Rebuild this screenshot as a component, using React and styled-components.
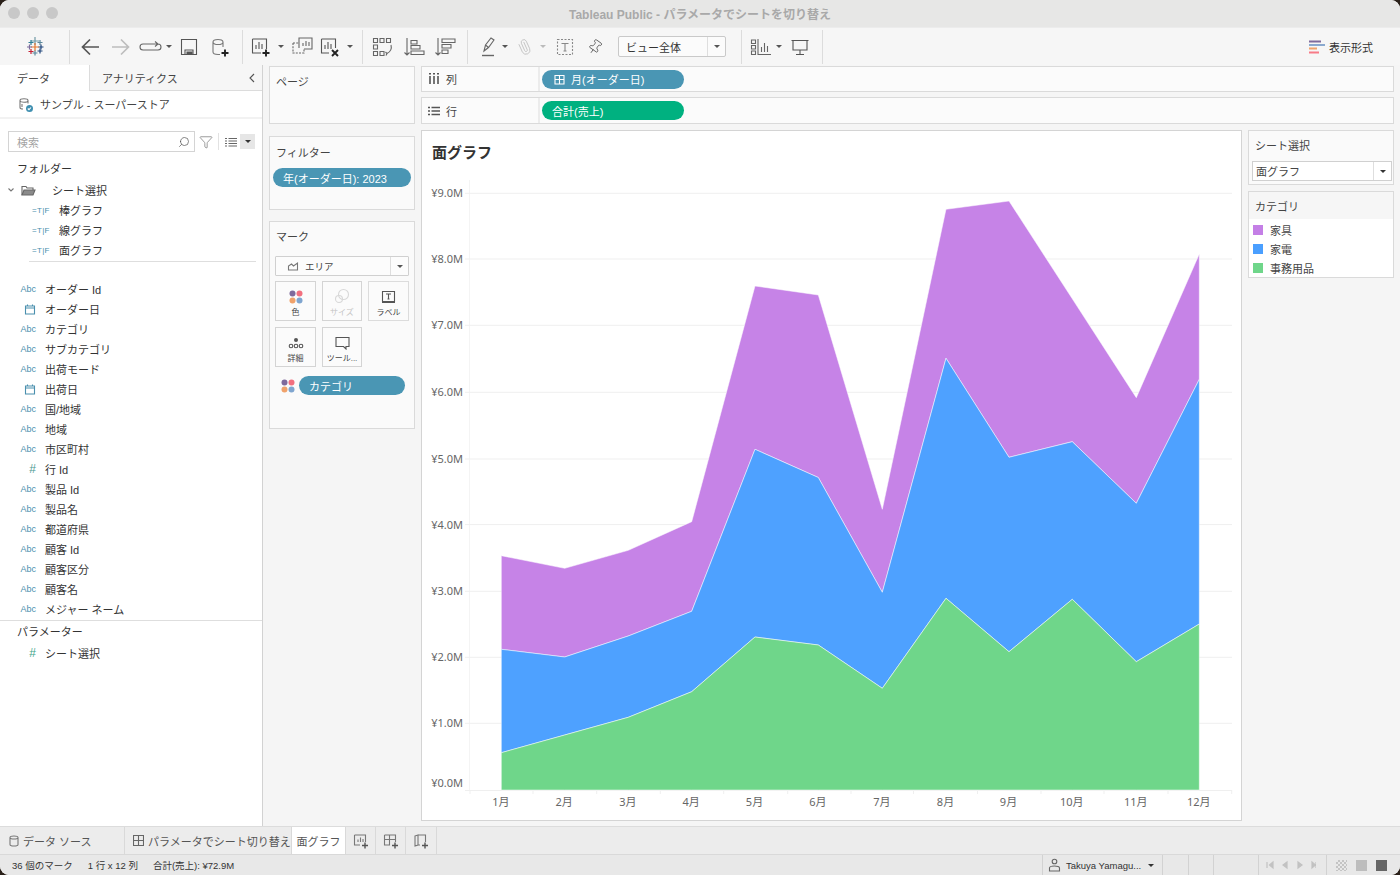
import React from "react";
import styled, { createGlobalStyle } from "styled-components";
import { Paperclip, Pin, Search, Filter } from "lucide-react";

const GlobalStyle = createGlobalStyle`
  html, body {
    margin: 0;
    padding: 0;
    background: #2a2019;
  }
  body {
    font-family: "Liberation Sans", "Noto Sans CJK JP", sans-serif;
    font-size: 11px;
    color: #333;
  }
`;

const Window = styled.div`
  width: 1400px;
  height: 875px;
  display: flex;
  flex-direction: column;
  background: #f5f5f5;
  border-radius: 9px;
  overflow: hidden;
`;

const TitleBar = styled.div`
  height: 27px;
  flex: none;
  position: relative;
  display: flex;
  align-items: center;
  justify-content: center;
  background: #e7e7e6;
  font-size: 12px;
  font-weight: 700;
  color: #a9a9a9;
`;

const Lights = styled.div`
  position: absolute;
  left: 8px;
  top: 7px;
  display: flex;
  gap: 7px;
`;

const Light = styled.span`
  width: 12px;
  height: 12px;
  border-radius: 50%;
  background: #c8c8c8;
`;

const Toolbar = styled.div`
  height: 38px;
  flex: none;
  display: flex;
  align-items: center;
  background: #f6f6f6;
  border-top: 1px solid #ececec;
  box-sizing: border-box;
`;

const Tool = styled.div`
  width: ${(p) => p.$w || 24}px;
  height: 24px;
  flex: none;
  margin-left: ${(p) => p.$ml || 0}px;
  display: flex;
  align-items: center;
  justify-content: center;
  color: #666;
`;

const ToolSep = styled.div`
  width: 1px;
  height: 34px;
  flex: none;
  margin-left: ${(p) => p.$ml || 0}px;
  background: #dcdcdc;
`;

const Caret = styled.span`
  width: 0;
  height: 0;
  border-left: 3px solid transparent;
  border-right: 3px solid transparent;
  border-top: 3px solid ${(p) => p.$color || "#555"};
`;

const Glyph = styled.svg`
  display: block;
  flex: none;
  fill: none;
  stroke: ${(p) => p.$stroke || "#5c5c5c"};
  stroke-width: ${(p) => p.$sw || 1.1};
`;

const ToolCombo = styled.div`
  width: 108px;
  height: 21px;
  flex: none;
  margin-left: 11px;
  box-sizing: border-box;
  display: flex;
  align-items: center;
  background: #fbfbfb;
  border: 1px solid #c9c9c9;
  border-radius: 2px;
  padding-left: 7px;
  color: #333;
`;

const ComboText = styled.span`
  flex: 1;
`;

const ComboArrow = styled.span`
  width: 17px;
  height: 100%;
  display: flex;
  align-items: center;
  justify-content: center;
  border-left: 1px solid #dedede;
`;

const FormatButton = styled.div`
  margin-left: auto;
  margin-right: 27px;
  display: flex;
  align-items: center;
  gap: 4px;
  color: #333;
`;

const Main = styled.div`
  flex: 1;
  min-height: 0;
  display: flex;
`;

const DataPane = styled.aside`
  width: 263px;
  flex: none;
  box-sizing: border-box;
  background: #fff;
  border-right: 1px solid #d2d2d2;
`;

const PaneTabs = styled.div`
  height: 26px;
  display: flex;
`;

const PaneTab = styled.div`
  width: ${(p) => (p.$active ? "89px" : "auto")};
  flex: ${(p) => (p.$active ? "none" : "1")};
  box-sizing: border-box;
  display: flex;
  align-items: center;
  justify-content: space-between;
  padding: 0 6px 0 ${(p) => (p.$active ? 17 : 12)}px;
  background: ${(p) => (p.$active ? "#fff" : "#f6f6f6")};
  border-bottom: ${(p) => (p.$active ? "none" : "1px solid #dcdcdc")};
  border-left: ${(p) => (p.$active ? "none" : "1px solid #dcdcdc")};
  color: #444;
`;

const SourceRow = styled.div`
  height: 26px;
  box-sizing: content-box;
  display: flex;
  align-items: center;
  gap: 7px;
  padding-left: 18px;
  border-bottom: 2px solid #f2f2f2;
  color: #444;
`;

const SearchRow = styled.div`
  height: 21px;
  margin: 12px 0 0 8px;
  display: flex;
  align-items: center;
`;

const SearchBox = styled.div`
  width: 187px;
  height: 21px;
  box-sizing: border-box;
  display: flex;
  align-items: center;
  justify-content: space-between;
  padding: 0 4px 0 8px;
  border: 1px solid #d4d4d4;
  color: #a3a3a3;
`;

const SearchIcons = styled.div`
  display: flex;
  align-items: center;
  margin-left: 4px;
`;

const MiniSep = styled.span`
  width: 1px;
  height: 17px;
  margin: 0 6px 0 5px;
  background: #e2e2e2;
`;

const MenuBtn = styled.span`
  width: 15px;
  height: 15px;
  margin-left: 3px;
  display: flex;
  align-items: center;
  justify-content: center;
  background: #e6e6e6;
`;

const SectionHead = styled.div`
  height: 20px;
  margin-top: ${(p) => p.$mt || 0}px;
  padding-left: 17px;
  display: flex;
  align-items: center;
  color: #333;
`;

const FolderRow = styled.div`
  height: 20px;
  margin-top: 2px;
  display: flex;
  align-items: center;
  padding-left: 8px;
  color: #333;
`;

const SetRow = styled.div`
  height: 20px;
  display: flex;
  align-items: center;
  padding-left: 32px;
  color: #333;
`;

const SetMark = styled.span`
  width: 27px;
  font-size: 8px;
  letter-spacing: 0.3px;
  color: #4a8fae;
`;

const SetDivider = styled.div`
  height: 1px;
  margin: 1px 6px 0 29px;
  background: #dedede;
`;

const FieldList = styled.div`
  margin-top: 17px;
  padding-bottom: 1px;
  border-bottom: 1px solid #dedede;
`;

const FieldRow = styled.div`
  height: 20px;
  display: flex;
  align-items: center;
  color: #333;
`;

const TypeIcon = styled.span`
  width: 45px;
  flex: none;
  box-sizing: border-box;
  padding-right: 9px;
  display: flex;
  justify-content: flex-end;
  font-size: ${(p) => (p.$hash ? 12 : 9)}px;
  color: ${(p) => p.$color || "#4a8fae"};
`;

const Cards = styled.div`
  flex: 1;
  min-width: 0;
  display: flex;
  gap: 6px;
  padding: 1px 6px 5px 6px;
`;

const SideColumn = styled.div`
  width: 146px;
  flex: none;
  display: flex;
  flex-direction: column;
  gap: ${(p) => p.$gap || 6}px;
`;

const Card = styled.section`
  height: ${(p) => p.$h}px;
  box-sizing: border-box;
  background: #fafafa;
  border: 1px solid #dadada;
  padding: 4px 4px 0 ${(p) => p.$pl || 5}px;
  margin-top: ${(p) => p.$mt || 0}px;
`;

const CardTitle = styled.div`
  height: 20px;
  margin-top: ${(p) => p.$mt || 0}px;
  display: flex;
  align-items: center;
  padding-left: ${(p) => p.$pl || 1}px;
  color: #444;
`;

const Pill = styled.div`
  height: ${(p) => p.$h || 19}px;
  width: ${(p) => p.$w}px;
  flex: none;
  box-sizing: border-box;
  display: flex;
  align-items: center;
  gap: 5px;
  padding-left: ${(p) => p.$pl || 10}px;
  border-radius: 10px;
  background: ${(p) => p.$bg || "#4a96b4"};
  color: #fff;
`;

const FilterPill = styled(Pill)`
  margin: 6px 0 0 -2px;
`;

const MarkSelect = styled.div`
  height: 20px;
  margin: 10px 0 0 0;
  width: 134px;
  box-sizing: border-box;
  display: flex;
  align-items: center;
  background: #fcfcfc;
  border: 1px solid #d0d0d0;
  border-radius: 1px;
  font-size: 9.5px;
  color: #444;
  padding-left: 11px;
  gap: 6px;
`;

const MarkGrid = styled.div`
  margin-top: 5px;
  display: grid;
  grid-template-columns: 41px 40px 41px;
  grid-auto-rows: 40px;
  gap: 6px;
  width: 134px;
`;

const MarkBtn = styled.div`
  box-sizing: border-box;
  display: flex;
  flex-direction: column;
  align-items: center;
  justify-content: flex-end;
  gap: 3px;
  padding-bottom: 2px;
  background: #fbfbfb;
  border: 1px solid ${(p) => (p.$thick ? "#dcdcdc" : "#d4d4d4")};
  font-size: 8px;
  line-height: 11px;
  color: ${(p) => (p.$off ? "#c4c4c4" : "#444")};
`;

const MarkPillRow = styled.div`
  margin-top: 9px;
  display: flex;
  align-items: center;
  gap: 4px;
  padding-left: 6px;
`;

const Work = styled.div`
  flex: 1;
  min-width: 0;
  display: flex;
  flex-direction: column;
`;

const Shelf = styled.div`
  height: ${(p) => p.$h}px;
  margin-bottom: ${(p) => p.$mb}px;
  flex: none;
  box-sizing: border-box;
  display: flex;
  align-items: center;
  background: #fbfbfb;
  border: 1px solid #dadada;
`;

const ShelfLabel = styled.div`
  width: 118px;
  height: 100%;
  flex: none;
  box-sizing: border-box;
  display: flex;
  align-items: center;
  gap: 6px;
  padding-left: 6px;
  margin-right: 2px;
  border-right: 2px solid #ececec;
  color: #444;
`;

const ViewRow = styled.div`
  flex: 1;
  min-height: 0;
  display: flex;
  gap: 6px;
`;

const ChartCard = styled.div`
  width: 821px;
  flex: none;
  box-sizing: border-box;
  display: flex;
  flex-direction: column;
  background: #fff;
  border: 1px solid #d4d4d4;
`;

const ChartTitle = styled.h1`
  margin: 0;
  height: 49px;
  flex: none;
  box-sizing: border-box;
  padding: 11px 0 0 10px;
  font-size: 15px;
  line-height: 21px;
  font-weight: 700;
  color: #333;
`;

const SheetSelect = styled.div`
  height: 20px;
  margin-top: 6px;
  margin-left: -2px;
  width: 140px;
  box-sizing: border-box;
  display: flex;
  align-items: center;
  padding-left: 3px;
  background: #fff;
  border: 1px solid #d0d0d0;
  color: #444;
`;

const Legend = styled.section`
  height: 87px;
  box-sizing: border-box;
  background: #fff;
  border: 1px solid #dadada;
`;

const LegendHead = styled.div`
  height: 27px;
  display: flex;
  align-items: center;
  padding-left: 6px;
  background: #f6f6f6;
  color: #444;
`;

const LegendRow = styled.div`
  height: 19px;
  display: flex;
  align-items: center;
  gap: 7px;
  padding-left: 4px;
  color: #444;
`;

const LegendBody = styled.div`
  padding-top: 1px;
`;

const Swatch = styled.span`
  width: 10px;
  height: 10px;
  background: ${(p) => p.$c};
`;

const TabBar = styled.div`
  height: 29px;
  flex: none;
  box-sizing: border-box;
  display: flex;
  background: #ececec;
  border-top: 1px solid #dcdcdc;
  border-bottom: 1px solid #d9d9d9;
  color: #555;
`;

const SheetTab = styled.div`
  width: ${(p) => p.$w}px;
  flex: none;
  box-sizing: border-box;
  display: flex;
  align-items: center;
  justify-content: ${(p) => (p.$center ? "center" : "flex-start")};
  gap: 4px;
  padding-left: ${(p) => p.$pl || 0}px;
  background: ${(p) => (p.$active ? "#fff" : "transparent")};
  border-right: 1px solid #d9d9d9;
`;

const StatusBar = styled.div`
  height: 20px;
  flex: none;
  display: flex;
  align-items: center;
  background: #e8e8e8;
  font-size: 9.5px;
  color: #333;
`;

const StatusText = styled.span`
  margin-left: ${(p) => p.$ml}px;
`;

const StatusCells = styled.div`
  margin-left: auto;
  height: 100%;
  display: flex;
`;

const StatusCell = styled.div`
  width: ${(p) => p.$w}px;
  box-sizing: border-box;
  display: flex;
  align-items: center;
  gap: ${(p) => p.$gap || 0}px;
  padding-left: ${(p) => p.$pl || 0}px;
  border-left: 1px solid #d2d2d2;
`;

const ViewSquare = styled.span`
  width: 11px;
  height: 11px;
  background: ${(p) => p.$c};
`;

const Bars = () => (
  <path d="M7 14V10M10 14V7M13 14V9" />
);

const Plus = ({ x, y }) => (
  <path d={`M${x - 3.5} ${y}H${x + 3.5}M${x} ${y - 3.5}V${y + 3.5}`} stroke="#222" strokeWidth="1.9" />
);

const I = ({ children, w = 24, h = 24, ...rest }) => (
  <Glyph width={w} height={h} viewBox={`0 0 ${w} ${h}`} {...rest}>
    {children}
  </Glyph>
);

const TableauLogo = () => {
  const crosses = [
    [12, 6, 4, "#7199a6"],
    [8, 7.5, 2.5, "#2e7f97"],
    [17, 7.5, 2.5, "#5b879b"],
    [12, 12, 4, "#e8762c"],
    [6.5, 12, 2.5, "#7b6a9b"],
    [18, 12, 2.5, "#1f447a"],
    [8, 16.5, 2.5, "#c72035"],
    [17, 16, 2.5, "#1f447a"],
    [12, 18, 2.5, "#59879b"],
  ];
  return (
    <I>
      {crosses.map(([x, y, r, c]) => (
        <path key={`${x}${y}`} d={`M${x - r} ${y}H${x + r}M${x} ${y - r}V${y + r}`} stroke={c} strokeWidth="1.2" />
      ))}
    </I>
  );
};

const Dots = ({ r = 3 }) => (
  <I w={14} h={14}>
    <circle cx="3.5" cy="3.5" r={r} fill="#7f6a9c" stroke="none" />
    <circle cx="10.5" cy="3.5" r={r} fill="#f2707f" stroke="none" />
    <circle cx="3.5" cy="10.5" r={r} fill="#f0a26b" stroke="none" />
    <circle cx="10.5" cy="10.5" r={r} fill="#7fa5cf" stroke="none" />
  </I>
);

const CalendarIcon = () => (
  <I w={12} h={12} $stroke="#4a8fae">
    <path d="M1.5 3h9v8h-9zM1.5 5h9M3.5 1.5V3M8.5 1.5V3" />
  </I>
);

const toolbarLeft = [
  { sep: true, ml: 45 },
  { ml: 8, icon: <I $stroke="#555" $sw={1.7}><path d="M21 12H5M12 4.5 4.5 12l7.5 7.5" /></I> },
  { ml: 7, icon: <I $stroke="#bdbdbd" $sw={1.7}><path d="M3 12h16M12 4.5l7.5 7.5-7.5 7.5" /></I> },
  { ml: 2, w: 30, icon: <I w={30} $stroke="#666"><path d="M8 9h15a3 3 0 0 1 0 6H8a3 3 0 0 1 0-6M20 6.5 23 9l-3 2.500" /></I> },
  { w: 8, caret: true },
  { ml: 4, icon: <I $stroke="#555"><path d="M4.500 4.500h15v15h-15zM8 19.500V15h8v4.500" /><path d="M10 17h5v2.500h-5z" fill="#555" /></I> },
  { ml: 7, icon: <I $stroke="#777"><path d="M5 7v10c0 1.500 2 2.500 5 2.500h2M15 7v5M5 7c0-3.400 10-3.400 10 0s-10 3.400-10 0" /><Plus x={17} y={18} /></I> },
  { sep: true, ml: 10 },
  { ml: 6, icon: <I $stroke="#555"><path d="M3.500 4h14v10M12 18H3.500V4" /><Bars /><Plus x={17} y={18} /></I> },
  { ml: 4, w: 8, caret: true },
  { ml: 5, icon: <I $stroke="#666"><path d="M9 13V3h13v11H14" /><path d="M13 11V8M16 11V6M19 11V7" /><path d="M3 8h6M3 8v10h11v-4" strokeDasharray="2 1.200" /></I> },
  { ml: 4, icon: <I $stroke="#555"><path d="M3.500 4h14v9M11 18H3.500V4" /><Bars /><path d="M14 15l6 6M20 15l-6 6" stroke="#222" strokeWidth="1.900" /></I> },
  { ml: 4, w: 8, caret: true },
  { sep: true, ml: 8 },
  { ml: 8, icon: <I $stroke="#666"><path d="M2.500 3.500h4v4h-4zM9 3.500h4v4H9zM15.500 3.500h4v4h-4zM2.500 10h4v4h-4zM2.500 16.500h4v4h-4zM9 16.500h4v4H9z" /><path d="M20 10c1 4-1 7-4 8.500M14.500 17l1.500 1.500-1 2" /></I> },
  { ml: 7, icon: <I $stroke="#666"><path d="M5 3v17M2.500 17.500 5 20l2.500-2.500M9 5.500h6v3.500H9zM9 10.500h9V14H9zM9 16h13v3.500H9z" /></I> },
  { ml: 7, icon: <I $stroke="#666"><path d="M5 3v17M2.500 17.500 5 20l2.500-2.500M9 4h13v3.500H9zM9 9.500h9V13H9zM9 15h6v3.500H9z" /></I> },
  { sep: true, ml: 10 },
  { ml: 9, icon: <I $stroke="#666"><path d="M7 16l1.500-6L14 3l3 2-5.500 7.500L7 16zM8.500 10l3 2.500" /><path d="M5 20.500h12" strokeWidth="1.400" /></I> },
  { w: 8, caret: true },
  { ml: 4, icon: <Paperclip size={16} color="#bfbfbf" strokeWidth={1.2} style={{ transform: "scaleX(-1) rotate(-20deg)" }} /> },
  { ml: 2, w: 8, caret: true, off: true },
  { ml: 6, icon: <I $stroke="#888"><path d="M4.500 4.500h15v15h-15z" strokeDasharray="2 1.500" /><path d="M8.500 8.500h7M12 8.500v7.500M10.500 16h3" /></I> },
  { ml: 6, icon: <Pin size={16} color="#555" strokeWidth={1.2} style={{ transform: "rotate(35deg)" }} /> },
];

const toolbarRight = [
  { sep: true, ml: 15 },
  { ml: 7, icon: <I $stroke="#666"><path d="M2.500 5h4v3.500h-4zM2.500 10.500h4V14h-4zM2.500 16h4v3.500h-4zM9 4v15.500h13M12.500 17v-5M15.500 17V8M18.500 17v-6" /></I> },
  { ml: 2, w: 8, caret: true },
  { ml: 5, icon: <I $stroke="#555"><path d="M3.500 5.500h17M5 5.500V15h14V5.500M12 15v4M8 19.500h8" /></I> },
  { sep: true, ml: 10 },
];

const renderTool = (t, i) => {
  if (t.sep) return <ToolSep key={i} $ml={t.ml} />;
  if (t.caret)
    return (
      <Tool key={i} $w={t.w} $ml={t.ml}>
        <Caret $color={t.off ? "#bbb" : "#555"} />
      </Tool>
    );
  return (
    <Tool key={i} $w={t.w} $ml={t.ml}>
      {t.icon}
    </Tool>
  );
};

const fields = [
  ["abc", "オーダー Id"],
  ["date", "オーダー日"],
  ["abc", "カテゴリ"],
  ["abc", "サブカテゴリ"],
  ["abc", "出荷モード"],
  ["date", "出荷日"],
  ["abc", "国/地域"],
  ["abc", "地域"],
  ["abc", "市区町村"],
  ["num", "行 Id"],
  ["abc", "製品 Id"],
  ["abc", "製品名"],
  ["abc", "都道府県"],
  ["abc", "顧客 Id"],
  ["abc", "顧客区分"],
  ["abc", "顧客名"],
  ["abc", "メジャー ネーム"],
];

const FieldType = ({ kind }) => {
  if (kind === "date")
    return (
      <TypeIcon>
        <CalendarIcon />
      </TypeIcon>
    );
  if (kind === "num")
    return (
      <TypeIcon $hash $color="#4d9a92">
        #
      </TypeIcon>
    );
  return <TypeIcon>Abc</TypeIcon>;
};

// chart geometry, in page pixels
const MONTH_X = [501.3, 564.7, 628.3, 691.7, 755, 818.3, 882.3, 946, 1009, 1072.3, 1136.3, 1199.3];
const BASE_Y = 790;
const GREEN = [752.7, 735, 717.3, 691.7, 637, 645, 688.3, 598.3, 651.7, 599.3, 661.7, 624];
const BLUE = [649.3, 657, 636, 611.3, 449.3, 477.5, 592.3, 358.3, 457.3, 441.7, 503.3, 379.3];
const PURPLE = [555.7, 568.3, 550.3, 521.7, 286, 295, 509.3, 209.3, 201, 298.8, 397.7, 254];
const GRID = [
  [9, 193.3],
  [8, 259],
  [7, 325.3],
  [6, 392.3],
  [5, 459],
  [4, 524.6],
  [3, 591.3],
  [2, 657.3],
  [1, 723.3],
];
const X_TICKS = [470, 533, 596.7, 660.3, 723.7, 787.7, 851, 913.5, 977.5, 1041, 1104, 1168, 1231.7];

const band = (top, bottom) => {
  const up = top.map((y, i) => `${MONTH_X[i]},${y}`);
  const down = bottom.map((y, i) => `${MONTH_X[i]},${y}`).reverse();
  return [...up, ...down].join(" ");
};

const AreaChart = () => {
  const zero = MONTH_X.map(() => BASE_Y);
  return (
    <svg width="819" height="639" viewBox="422 180 819 639" style={{ display: "block" }}>
      <path d="M469.500 180V790" stroke="#f4f4f4" />
      {GRID.map(([v, y]) => (
        <path key={v} d={`M465 ${y}H1232`} stroke="#efefef" />
      ))}
      <path d="M465 790.500H1232" stroke="#efefef" />
      {X_TICKS.map((x) => (
        <path key={x} d={`M${x} 790V794`} stroke="#efefef" />
      ))}
      <polygon points={band(PURPLE, BLUE)} fill="#c47fe6" fillOpacity="0.97" stroke="#fff" strokeWidth="0.5" />
      <polygon points={band(BLUE, GREEN)} fill="#4a9fff" fillOpacity="0.98" stroke="#fff" strokeWidth="0.5" />
      <polygon points={band(GREEN, zero)} fill="#6fd68a" stroke="#fff" strokeWidth="0.5" />
      <g fontFamily="'Noto Sans', 'Noto Sans CJK JP', sans-serif" fontSize="11" fill="#666">
        {GRID.map(([v, y]) => (
          <text key={v} x="463" y={y + 4} textAnchor="end">
            ¥{v}.0M
          </text>
        ))}
        <text x="463" y="786.500" textAnchor="end">
          ¥0.0M
        </text>
        {MONTH_X.map((x, i) => (
          <text key={x} x={x - 0.5} y="806" textAnchor="middle">
            {i + 1}月
          </text>
        ))}
      </g>
    </svg>
  );
};

export default function App() {
  return (
    <>
      <GlobalStyle />
      <Window>
        <TitleBar>
          <Lights>
            <Light />
            <Light />
            <Light />
          </Lights>
          Tableau Public - パラメータでシートを切り替え
        </TitleBar>

        <Toolbar>
          <Tool $w={0} style={{ overflow: "visible" }}>
            <div style={{ marginLeft: 46 }}>
              <TableauLogo />
            </div>
          </Tool>
          {toolbarLeft.map(renderTool)}
          <ToolCombo>
            <ComboText>ビュー全体</ComboText>
            <ComboArrow>
              <Caret />
            </ComboArrow>
          </ToolCombo>
          {toolbarRight.map(renderTool)}
          <FormatButton>
            <I w={16} h={14} $sw={2.2}>
              <path d="M0 1.500H12" stroke="#7f6a9c" />
              <path d="M0 5H16" stroke="#8aa9cf" />
              <path d="M0 8.500H8" stroke="#f0a26b" />
              <path d="M0 12.500H10" stroke="#f77b87" />
            </I>
            表示形式
          </FormatButton>
        </Toolbar>

        <Main>
          <DataPane>
            <PaneTabs>
              <PaneTab $active>データ</PaneTab>
              <PaneTab>
                アナリティクス
                <I w={8} h={12} $stroke="#555">
                  <path d="M6 2 2 6l4 4" />
                </I>
              </PaneTab>
            </PaneTabs>
            <SourceRow>
              <I w={15} h={15} $stroke="#777">
                <path d="M2 3.500v7c0 1 1.500 1.500 3 1.500M10 3.500v3M2 3.500c0-2.300 8-2.300 8 0s-8 2.300-8 0M4 7v3" />
                <circle cx="11.500" cy="11.500" r="3.500" fill="#3f8fb0" stroke="none" />
                <path d="M9.800 11.500l1.200 1.200 2-2.200" stroke="#fff" />
              </I>
              サンプル - スーパーストア
            </SourceRow>
            <SearchRow>
              <SearchBox>
                検索
                <Search size={12} color="#555" strokeWidth={1.4} style={{ transform: "scaleX(-1)" }} />
              </SearchBox>
              <SearchIcons>
                <Filter size={14} color="#666" strokeWidth={1.1} />
                <MiniSep />
                <I w={12} h={10} $stroke="#666">
                  <path d="M0 1.500h2M0 4h2M0 6.500h2M0 9h2M3.500 1.500H12M3.500 4H12M3.500 6.500H12M3.500 9H12" />
                </I>
                <MenuBtn>
                  <Caret $color="#333" />
                </MenuBtn>
              </SearchIcons>
            </SearchRow>
            <SectionHead $mt={6}>フォルダー</SectionHead>
            <FolderRow>
              <I w={6} h={6} $stroke="#777">
                <path d="M.5 1.500 3 4l2.500-2.500" />
              </I>
              <span style={{ width: 31, paddingLeft: 7 }}>
                <I w={15} h={11} $stroke="#666">
                  <path d="M1 10V1.500h4l1 1.500h6V5" />
                  <path d="M1 10l2-5h11l-2 5z" fill="#8a8a8a" />
                </I>
              </span>
              シート選択
            </FolderRow>
            {["棒グラフ", "線グラフ", "面グラフ"].map((s) => (
              <SetRow key={s}>
                <SetMark>=T|F</SetMark>
                {s}
              </SetRow>
            ))}
            <SetDivider />
            <FieldList>
              {fields.map(([kind, name]) => (
                <FieldRow key={name}>
                  <FieldType kind={kind} />
                  {name}
                </FieldRow>
              ))}
            </FieldList>
            <SectionHead>パラメーター</SectionHead>
            <FieldRow style={{ marginTop: 2 }}>
              <TypeIcon $hash $color="#3fa58a">
                #
              </TypeIcon>
              シート選択
            </FieldRow>
          </DataPane>

          <Cards>
            <SideColumn $gap={0}>
              <Card $h={58}>
                <CardTitle>ページ</CardTitle>
              </Card>
              <Card $h={74} $mt={6} $pl={5}>
                <CardTitle $mt={1}>フィルター</CardTitle>
                <FilterPill $w={138}>年(オーダー日): 2023</FilterPill>
              </Card>
              <Card $h={208} $mt={5}>
                <CardTitle>マーク</CardTitle>
                <MarkSelect>
                  <I w={12} h={10} $stroke="#777">
                    <path d="M1.500 9V5l3-2 2 2 4-3v7z" />
                  </I>
                  <ComboText>エリア</ComboText>
                  <ComboArrow>
                    <Caret />
                  </ComboArrow>
                </MarkSelect>
                <MarkGrid>
                  <MarkBtn>
                    <Dots />
                    色
                  </MarkBtn>
                  <MarkBtn $off>
                    <I w={16} h={16} $stroke="#d8d8d8">
                      <circle cx="9.500" cy="6.500" r="5" />
                      <circle cx="5" cy="11" r="3.500" />
                    </I>
                    サイズ
                  </MarkBtn>
                  <MarkBtn $thick>
                    <I w={15} h={14} $stroke="#555">
                      <path d="M1.500 1.500h12v10h-12zM1 12.500h13" />
                      <path d="M5 4h5M7.500 4v5M6.500 9h2" />
                    </I>
                    ラベル
                  </MarkBtn>
                  <MarkBtn>
                    <I w={16} h={14} $stroke="#555">
                      <circle cx="8" cy="4" r="2" fill="#555" stroke="none" />
                      <circle cx="3" cy="10" r="1.800" />
                      <circle cx="8" cy="10" r="1.800" />
                      <circle cx="13" cy="10" r="1.800" />
                    </I>
                    詳細
                  </MarkBtn>
                  <MarkBtn>
                    <I w={15} h={14} $stroke="#555">
                      <path d="M1 1.500h13v9H11v2.500L8.500 10.500H1z" />
                    </I>
                    ツール...
                  </MarkBtn>
                </MarkGrid>
                <MarkPillRow>
                  <Dots />
                  <Pill $w={106} $pl={10}>
                    カテゴリ
                  </Pill>
                </MarkPillRow>
              </Card>
            </SideColumn>

            <Work>
              <Shelf $h={26} $mb={5}>
                <ShelfLabel>
                  <I w={12} h={12} $sw={1.6} $stroke="#555">
                    <path d="M2 3v8M6 3v8M10 3v8" />
                    <path d="M1 .8h2M5 .8h2M9 .8h2" />
                  </I>
                  列
                </ShelfLabel>
                <Pill $w={142} $pl={11}>
                  <I w={13} h={13} $stroke="#fff">
                    <path d="M2 2.500h9v8.500H2zM2 6.500h9M6.500 2.500v8.500" />
                  </I>
                  月(オーダー日)
                </Pill>
              </Shelf>
              <Shelf $h={27} $mb={6}>
                <ShelfLabel>
                  <I w={12} h={12} $sw={1.3} $stroke="#555">
                    <path d="M0 2.500h2M3.500 2.500H12M0 6h2M3.500 6H12M0 9.500h2M3.500 9.500H12" />
                  </I>
                  行
                </ShelfLabel>
                <Pill $w={142} $bg="#00b180">
                  合計(売上)
                </Pill>
              </Shelf>
              <ViewRow>
                <ChartCard>
                  <ChartTitle>面グラフ</ChartTitle>
                  <AreaChart />
                </ChartCard>
                <SideColumn $gap={6}>
                  <Card $h={55}>
                    <CardTitle $mt={0}>シート選択</CardTitle>
                    <SheetSelect>
                      <ComboText>面グラフ</ComboText>
                      <ComboArrow>
                        <Caret $color="#333" />
                      </ComboArrow>
                    </SheetSelect>
                  </Card>
                  <Legend>
                    <LegendHead>カテゴリ</LegendHead>
                    <LegendBody>
                      <LegendRow>
                        <Swatch $c="#c47fe6" />
                        家具
                      </LegendRow>
                      <LegendRow>
                        <Swatch $c="#4a9fff" />
                        家電
                      </LegendRow>
                      <LegendRow>
                        <Swatch $c="#6fd68a" />
                        事務用品
                      </LegendRow>
                    </LegendBody>
                  </Legend>
                </SideColumn>
              </ViewRow>
            </Work>
          </Cards>
        </Main>

        <TabBar>
          <SheetTab $w={125} $pl={9}>
            <I w={10} h={12} $stroke="#777">
              <path d="M1 2.500v7c0 2 8 2 8 0v-7M1 2.500c0-2 8-2 8 0s-8 2-8 0" />
            </I>
            データ ソース
          </SheetTab>
          <SheetTab $w={167} $pl={8}>
            <I w={11} h={11} $stroke="#666">
              <path d="M.5.500h10v10H.5zM.5 5.500h10M5.500.500v10" />
            </I>
            パラメータでシート切り替え
          </SheetTab>
          <SheetTab $w={54} $active $center>
            面グラフ
          </SheetTab>
          <SheetTab $w={30} $center>
            <I w={16} h={16} $stroke="#777">
              <path d="M1.500 2h11v7M7 12H1.500V2M5 9V6.500M7.500 9V4.500M10 9V6" />
              <path d="M9 12.500h6M12 9.500v6" stroke="#555" strokeWidth="1.400" />
            </I>
          </SheetTab>
          <SheetTab $w={30} $center>
            <I w={16} h={16} $stroke="#777">
              <path d="M1.500 2h11v7M7 12H1.500V2M1.500 6.500h11M6.500 2v10" />
              <path d="M9 12.500h6M12 9.500v6" stroke="#555" strokeWidth="1.400" />
            </I>
          </SheetTab>
          <SheetTab $w={31} $center>
            <I w={16} h={16} $stroke="#777">
              <path d="M2 3l3-1v10l-3 1zM5 2h7.500v7M5 12h2" />
              <path d="M9 12.500h6M12 9.500v6" stroke="#555" strokeWidth="1.400" />
            </I>
          </SheetTab>
        </TabBar>

        <StatusBar>
          <StatusText $ml={12}>36 個のマーク</StatusText>
          <StatusText $ml={15}>1 行 x 12 列</StatusText>
          <StatusText $ml={15}>合計(売上): ¥72.9M</StatusText>
          <StatusCells>
            <StatusCell $w={120} $pl={5} $gap={5}>
              <I w={13} h={14} $stroke="#666">
                <circle cx="6.500" cy="3.500" r="2.300" />
                <path d="M1.500 13V10c0-1.500 2-2 5-2s5 .5 5 2v3z" />
              </I>
              <span style={{ width: 77 }}>Takuya Yamagu...</span>
              <Caret $color="#333" />
            </StatusCell>
            <StatusCell $w={26} />
            <StatusCell $w={25} />
            <StatusCell $w={45} />
            <StatusCell $w={68} $pl={7} $gap={5}>
              <I w={50} h={10} $stroke="#c2c2c2" $sw={1.2}>
                <path d="M1 2v6M7 2 3.500 5 7 8z" fill="#c2c2c2" />
                <path d="M21 2l-4 3 4 3z" fill="#c2c2c2" />
                <path d="M32 2l4 3-4 3z" fill="#c2c2c2" />
                <path d="M46 2l3.500 3L46 8zM50 2v6" fill="#c2c2c2" />
              </I>
            </StatusCell>
            <StatusCell $w={74} $pl={9} $gap={9}>
              <ViewSquare $c="repeating-conic-gradient(#c4c4c4 0 25%, #e8e8e8 0 50%) 0 0 / 4px 4px" />
              <ViewSquare $c="#bdbdbd" />
              <ViewSquare $c="#666" />
            </StatusCell>
          </StatusCells>
        </StatusBar>
      </Window>
    </>
  );
}
